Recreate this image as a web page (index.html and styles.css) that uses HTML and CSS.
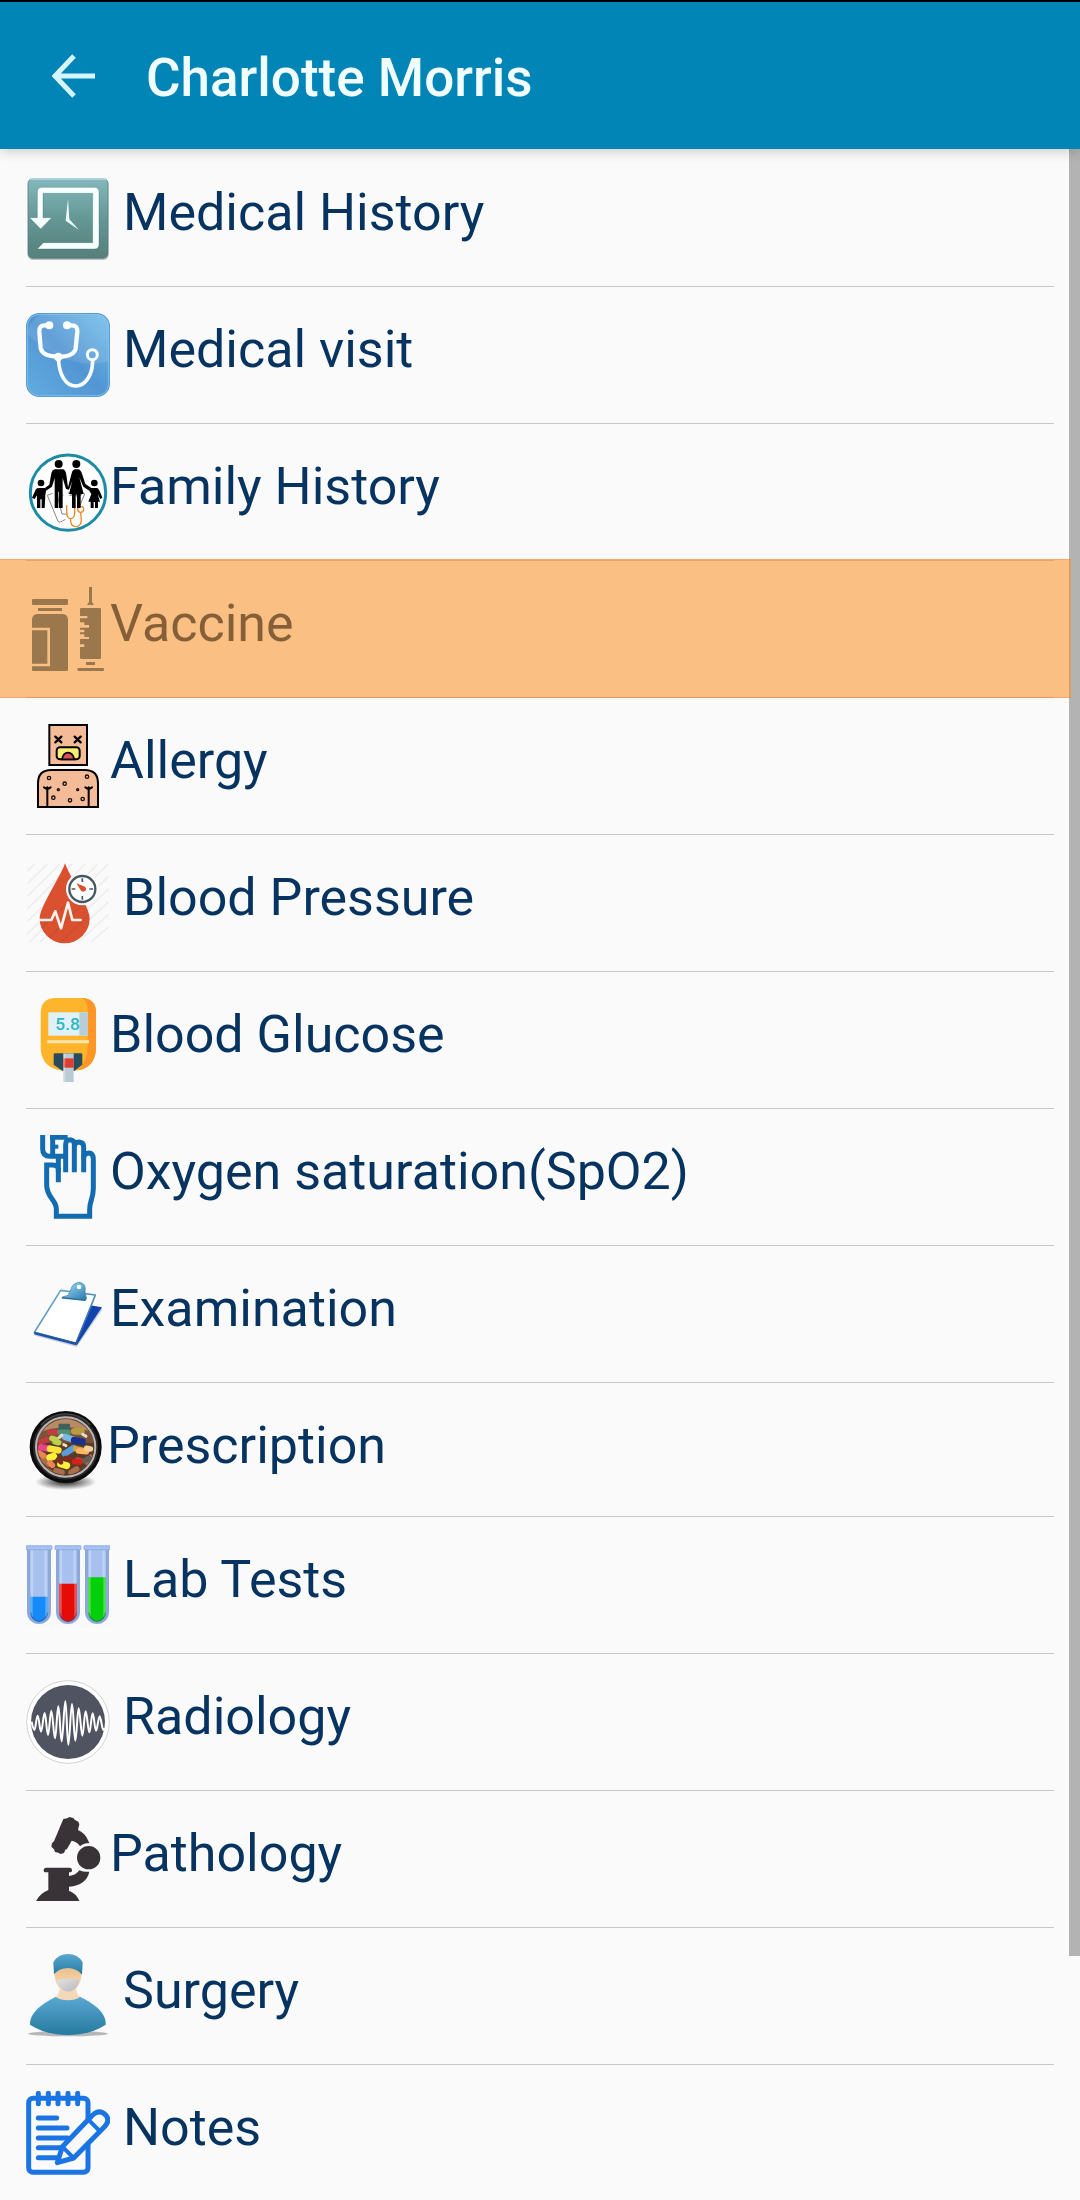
FILE: index.html
```html
<!DOCTYPE html>
<html lang="en">
<head>
    <meta charset="UTF-8">
    <meta name="viewport" content="width=device-width, initial-scale=1.0">
    <title>Charlotte Morris</title>
    <link rel="stylesheet" href="styles.css">
</head>
<body>

    <header class="toolbar">
        <button class="back" aria-label="Back">
            <svg viewBox="0 0 44 44"><path d="M43 22H3M22 2L3 22L22 42" fill="none" stroke="#d5f5ff" stroke-width="5"/></svg>
        </button>
        <h1>Charlotte Morris</h1>
    </header>

    <main class="content">
        <ul class="menu">
            <li><a href="#history">
                <svg class="icon" viewBox="0 0 252 252">
                    <defs><linearGradient id="teal" x2="0" y2="1"><stop offset="0" stop-color="#83b8bd"/><stop offset=".5" stop-color="#659795"/><stop offset="1" stop-color="#557f7b"/></linearGradient></defs>
                    <rect x="5" y="9" width="243" height="243" rx="16" fill="#999" opacity=".6"/>
                    <rect x="6" y="8" width="240" height="239" rx="15" fill="url(#teal)" stroke="#4f7c7c" stroke-width="2"/>
                    <path d="M10 9H242" stroke="#b8dfe5" stroke-width="4"/>
                    <path d="M34 125V48Q34 34 48 34H205Q219 34 219 48V205Q219 219 205 219H34L52 200H200V52H51V125H77L44 159L11 125Z" fill="#f7ffff" stroke="#466f6f" stroke-opacity=".35" stroke-width="3"/>
                    <path d="M126 68L130 130L159 162L119 134Z" fill="#f0ffff"/>
                </svg>
                <span class="label indent">Medical History</span></a></li>
            <li><a href="#visit">
                <svg class="icon" viewBox="0 0 252 252">
                    <defs><linearGradient id="sky" x1="1" x2="0" y2="1"><stop offset="0" stop-color="#75bfe9"/><stop offset=".5" stop-color="#5295d3"/><stop offset="1" stop-color="#62ace0"/></linearGradient></defs>
                    <rect width="252" height="252" rx="40" fill="#4f96d1"/>
                    <rect x="4" y="4" width="244" height="244" rx="36" fill="url(#sky)" stroke="#80c0ec" stroke-width="3"/>
                    <path d="M4 60Q20 4 60 4H210Q248 8 248 45V145Q170 165 90 125Q40 105 4 60Z" fill="#fff" opacity=".1"/>
                    <g fill="none" stroke="#fafeff" stroke-linecap="round">
                        <path d="M70 37H56Q39 37 40 56L44 106Q50 131 97 131Q144 131 149 106L154 56Q155 37 137 37H123" stroke-width="13"/>
                        <path d="M97 135C99 184 118 219 149 219C180 219 199 184 200 145" stroke-width="11"/>
                        <circle cx="199" cy="125" r="15" stroke-width="9"/>
                    </g>
                    <g fill="#fafeff"><circle cx="70" cy="37" r="12"/><circle cx="123" cy="37" r="12"/><circle cx="97" cy="132" r="13"/></g>
                </svg>
                <span class="label indent">Medical visit</span></a></li>
            <li><a href="#family">
                <svg class="icon" viewBox="0 0 252 252">
                    <circle cx="126" cy="128" r="113" fill="#fff" stroke="#1c8ca6" stroke-width="9"/>
                    <path d="M80 130L64 136L96 214Q100 220 118 208M112 135L96 145L108 192H125M125 128L160 142M130 136H165L168 128L176 132L162 166" fill="none" stroke="#888" stroke-width="3"/>
                    <path d="M122 166V186Q122 206 134 206Q146 206 146 186V166M134 206V214Q136 230 150 230Q166 228 166 210L164 188" fill="none" stroke="#e78b2a" stroke-width="4"/>
                    <circle cx="164" cy="178" r="9" fill="none" stroke="#e78b2a" stroke-width="4"/>
                    <circle cx="98" cy="42" r="12"/><circle cx="151" cy="42" r="12"/><circle cx="45" cy="99" r="10"/><circle cx="205" cy="99" r="10"/>
                    <path d="M86 58H111Q119 60 121 75L126 112L137 70Q140 58 148 58H157Q165 60 169 74L178 102L196 114H214Q220 118 229 143L223 147L215 132L222 155H216V174H207V156H203V174H194V155H187L196 132L190 122L172 110L160 82L173 132H164V174H153V134H149V174H138V132H129L139 92L129 119L120 117L110 84V174H99V125H97V174H86V84L78 110L60 122L58 136L56 174H47V148H43V174H33V136L26 147L18 143L30 117Q34 114 39 114H57L70 104L76 70Q78 60 86 58Z"/>
                </svg>
                <span class="label">Family History</span></a></li>
            <li class="pressed"><a href="#vaccine">
                <svg class="icon" viewBox="0 0 252 252">
                    <g fill="#32648d">
                        <rect x="18" y="36" width="108" height="18" rx="3"/><rect x="36" y="63" width="72" height="9"/>
                        <path d="M34 81H110Q126 83 126 98V248Q126 252 122 252H22Q18 252 18 248V98Q18 83 34 81Z"/>
                        <path d="M189 0H198V45L204 54H183L189 45ZM166 63H221Q225 63 225 67V212Q225 216 221 216H166Q162 216 162 212V180H175V172H162V156H189V150H175V142H162V136H175V128H162V122H189V114H175V106H162V94H184V87H162V67Q162 63 166 63Z"/>
                        <rect x="180" y="225" width="27" height="9"/><rect x="154" y="243" width="80" height="9" rx="4"/>
                    </g>
                    <path d="M18 126H68V234H18" fill="none" stroke="#fafafa" stroke-width="8"/>
                </svg>
                <span class="label">Vaccine</span></a></li>
            <li><a href="#allergy">
                <svg class="icon" viewBox="0 0 252 252">
                    <g fill="#f4bb98" stroke="#000" stroke-width="6">
                        <rect x="70" y="3" width="113" height="120"/>
                        <path d="M36 249V178Q36 138 76 138H176Q216 138 216 178V249Z"/>
                        <path d="M64 249V190M54 190L64 196L74 190M188 249V190M178 190L188 196L198 190" fill="none" stroke-linecap="round"/>
                        <path d="M88 38L106 55M106 38L88 55M146 38L164 55M164 38L146 55" stroke-width="7" stroke-linecap="round"/>
                        <rect x="92" y="70" width="69" height="36" rx="10" fill="#f7ee70"/>
                        <path d="M108 106Q112 86 126 86Q140 86 145 106Z" fill="#df5058" stroke-width="5"/>
                    </g>
                    <g fill="none" stroke="#180b08" stroke-width="4"><circle cx="69" cy="162" r="5"/><circle cx="116" cy="179" r="5"/><circle cx="183" cy="158" r="5"/><circle cx="82" cy="221" r="5"/><circle cx="132" cy="229" r="5"/><circle cx="170" cy="225" r="5"/><circle cx="97" cy="197" r="3"/><circle cx="155" cy="197" r="3"/></g>
                </svg>
                <span class="label">Allergy</span></a></li>
            <li><a href="#pressure">
                <svg class="icon" viewBox="0 0 252 252">
                    <path d="M4 30L26 8M4 68L64 8M4 106L102 8M4 144L140 8M4 182L178 8M4 220L216 8M10 244L248 8M42 244L248 46M80 244L248 84M118 244L248 122M156 244L248 160M194 244L248 198" stroke="#ececec" stroke-width="4"/>
                    <path d="M117 7C105 45 41 137 41 173A75 74 0 0 0 191 173C191 137 130 45 117 7Z" fill="#da5130"/>
                    <path d="M48 201L150 99M70 230L185 115M106 243L189 160" stroke="#cb4e31" stroke-width="5"/>
                    <path d="M42 177H76L88 151L105 202L126 125L139 177H164" fill="none" stroke="#fff4ee" stroke-width="8" stroke-linecap="round" stroke-linejoin="round"/>
                    <circle cx="169" cy="84" r="49" fill="#fafafa"/>
                    <circle cx="169" cy="84" r="39" fill="#fff" stroke="#465962" stroke-width="7"/>
                    <path d="M169 52V63M169 105V116M137 84H148M190 84H201" stroke="#465962" stroke-width="5"/>
                    <path d="M151 67L177 77Q184 84 176 91Q166 95 162 84Z" fill="#dc4e2c"/>
                </svg>
                <span class="label indent">Blood Pressure</span></a></li>
            <li><a href="#glucose">
                <svg class="icon" viewBox="0 0 252 252">
                    <path d="M84 0H170Q210 4 210 42V155Q205 214 143 218H112Q50 212 44 155V42Q46 4 84 0Z" fill="#ffb52b"/>
                    <path d="M170 0Q210 4 210 42V155Q205 208 157 217Q184 190 185 150V42Q185 10 170 0Z" fill="#ff9625"/>
                    <rect x="67" y="43" width="119" height="70" fill="#dff2fb"/><rect x="160" y="43" width="26" height="70" fill="#b7cdd7"/>
                    <text class="reading" x="88" y="97">5.8</text>
                    <path d="M64 131H189" stroke="#ffe6ae" stroke-width="9"/>
                    <path d="M87 166H165Q169 166 169 170V200L146 218H109L83 200V170Q83 166 87 166Z" fill="#264d5d"/>
                    <path d="M112 166H143V252H112Z" fill="#b9ccd6"/><path d="M112 181H143V209H112Z" fill="#dc3d30"/><path d="M112 166H118V252H112Z" fill="#fff" opacity=".3"/>
                </svg>
                <span class="label">Blood Glucose</span></a></li>
            <li><a href="#oxygen">
                <svg class="icon" viewBox="0 0 252 252">
                    <g fill="none" stroke="#126caf" stroke-width="15">
                        <path d="M97 142V102Q96 90 80 90H62V152C63 188 91 195 91 222V244H191V222C191 196 202 192 202 160V74Q202 54 188 54Q173 55 173 68"/>
                        <path d="M119 112V28Q119 14 132 14Q145 15 145 28V112M145 36Q145 21 159 21Q173 22 173 36V112"/>
                        <path d="M50 0V42Q50 64 72 64H119M80 0V65M72 7H125M97 65V112"/>
                        <path d="M84 35H97" stroke-width="12"/>
                    </g>
                </svg>
                <span class="label">Oxygen saturation(SpO2)</span></a></li>
            <li><a href="#examination">
                <svg class="icon" viewBox="0 0 252 252">
                    <defs>
                        <linearGradient id="board" x2="1" y2="1"><stop offset="0" stop-color="#6eb7cd"/><stop offset=".6" stop-color="#5085b6"/><stop offset="1" stop-color="#083fa2"/></linearGradient>
                        <linearGradient id="clip" x2="1" y2="1"><stop offset="0" stop-color="#a6e4fc"/><stop offset="1" stop-color="#2575a7"/></linearGradient>
                    </defs>
                    <path d="M26 188L151 222L228 110" fill="none" stroke="#ccd0d8" stroke-width="5"/>
                    <path d="M192 100L228 106L152 220L145 213Z" fill="#0f43ad"/>
                    <path d="M104 55L208 69L150 214L25 181Z" fill="#fff" stroke="url(#board)" stroke-width="5" stroke-linejoin="round"/>
                    <path d="M25 183L150 216" stroke="#1f54a8" stroke-width="7"/>
                    <path d="M108 75L126 70L133 57Q138 32 161 31Q182 34 177 60L182 80L178 85L108 79Z" fill="url(#clip)" stroke="#438ba9" stroke-width="2"/>
                    <circle cx="159" cy="45" r="7" fill="#fafafa"/>
                    <path d="M109 77L179 85" stroke="#2a6d96" stroke-width="4"/>
                </svg>
                <span class="label">Examination</span></a></li>
            <li><a href="#prescription">
                <svg class="icon small" viewBox="0 0 243 243">
                    <defs>
                        <clipPath id="dish"><circle cx="119" cy="114" r="84"/></clipPath>
                        <radialGradient id="shade"><stop offset="0" stop-color="#222"/><stop offset="1" stop-color="#222" stop-opacity="0"/></radialGradient>
                    </defs>
                    <ellipse cx="119" cy="219" rx="92" ry="24" fill="url(#shade)"/>
                    <circle cx="119" cy="114" r="103" fill="#28282a" stroke="#0c0c0d" stroke-width="10"/>
                    <circle cx="119" cy="114" r="89" fill="#5b3a26" stroke="#b9b5b5" stroke-width="6"/>
                    <g clip-path="url(#dish)" stroke-linecap="round" stroke-width="17">
                        <path d="M30 20H210V100H30Z" fill="#b98a66"/>
                        <path d="M30 75Q119 35 210 75V100H30Z" fill="#7a523a"/>
                        <path d="M98 44H132V73H98Z" fill="#3e605c"/>
                        <path d="M50 150L68 165M90 185L108 190M135 190L152 180M185 160L195 145" stroke="#a96c4c"/>
                        <path d="M72 70H90M45 99L62 92M155 153L166 156" stroke="#c53943"/>
                        <path d="M145 67H166" stroke="#b79b40" stroke-width="20"/>
                        <path d="M102 70H126" stroke="#548d72"/>
                        <path d="M78 88L91 92M87 98L98 101" stroke="#b8d24c"/>
                        <path d="M45 115L68 119" stroke="#e9428b" stroke-width="20"/><path d="M72 119L97 124" stroke="#ffe33a" stroke-width="20"/>
                        <path d="M117 84L139 91" stroke="#78b9e5" stroke-width="19"/><path d="M145 94L169 98" stroke="#18318e" stroke-width="21"/>
                        <path d="M116 134L143 117" stroke="#5a9ddb" stroke-width="19"/>
                        <path d="M149 119L167 123M57 182L72 191" stroke="#d2a44a"/>
                        <path d="M158 126L181 128" stroke="#ffb764"/><path d="M182 118L193 120" stroke="#efcf9b"/>
                        <path d="M71 146L83 142M104 165L122 170" stroke="#fff138" stroke-width="21"/>
                        <path d="M39 132L53 140M72 162L79 169" stroke="#ed8454"/>
                        <path d="M119 147L137 152M96 151L105 160" stroke="#842b20" stroke-width="14"/>
                        <path d="M146 158L161 159" stroke="#d4221a"/><path d="M177 155L189 148" stroke="#61605a"/>
                        <path d="M100 85L108 78M113 107L120 110M170 76L180 82" stroke="#e8dccb" stroke-width="9"/>
                    </g>
                    <path d="M45 48A99 99 0 0 1 193 48" fill="none" stroke="#69696b" stroke-width="4" opacity=".6"/>
                </svg>
                <span class="label">Prescription</span></a></li>
            <li><a href="#lab">
                <svg class="icon" viewBox="0 0 252 252">
                    <defs>
                        <pattern id="hatch" width="10" height="10" patternUnits="userSpaceOnUse"><path d="M0 0L10 10" stroke="#e7e8ec"/></pattern>
                        <g id="tube">
                            <path d="M3 20H75V207A36 36 0 0 1 3 207Z" fill="#8da8d8"/><path d="M12 20H66V207A27 30 0 0 1 12 207Z" fill="#a7c0ed"/>
                            <path d="M18 22V210M59 22V210" stroke="#bdd2f5" stroke-width="7"/>
                            <rect y="8" width="78" height="12" rx="2" fill="#a6c2f3" stroke="#7e9fd6" stroke-width="2"/>
                        </g>
                    </defs>
                    <path d="M0 4H252V250H0Z" fill="url(#hatch)"/>
                    <use href="#tube"/><use href="#tube" x="87"/><use href="#tube" x="174"/>
                    <path d="M12 161H66V207A27 30 0 0 1 12 207Z" fill="#148bf6"/><path d="M99 122H153V207A27 30 0 0 1 99 207Z" fill="#e50b07"/><path d="M186 103H240V207A27 30 0 0 1 186 207Z" fill="#05ce0b"/>
                    <path d="M12 161H20V223Q12 216 12 207ZM58 161H66V207Q65 218 58 224ZM99 122H107V223Q99 216 99 207ZM145 122H153V207Q152 218 145 224ZM186 103H194V223Q186 216 186 207ZM232 103H240V207Q239 218 232 224Z" fill="#fff" opacity=".3"/>
                    <path d="M14 209Q19 233 39 235Q60 232 65 209M101 209Q106 233 126 235Q147 232 152 209M188 209Q193 233 213 235Q234 232 239 209" fill="none" stroke="#34518c" stroke-opacity=".5" stroke-width="4"/>
                </svg>
                <span class="label indent">Lab Tests</span></a></li>
            <li><a href="#radiology">
                <svg class="icon" viewBox="0 0 252 252">
                    <circle cx="126" cy="126" r="124" fill="#fff" stroke="#d3d3d3" stroke-width="3"/>
                    <circle cx="126" cy="126" r="111" fill="#505460"/>
                    <path d="M17 125C20 140 22 150 25 150C29 150 31 107 35 107S41 155 45 155S52 99 56 99S62 165 66 165S72 92 76 92S83 175 87 175S93 79 97 79S103 184 107 184S114 64 118 64S123 194 127 194S134 72 138 72S144 182 148 182S154 85 158 85S165 167 169 167S175 94 179 94S186 157 190 157S196 100 200 100S206 152 210 152S217 109 221 109S228 150 232 150L235 145" fill="none" stroke="#fff" stroke-width="6"/>
                </svg>
                <span class="label indent">Radiology</span></a></li>
            <li><a href="#pathology">
                <svg class="icon" viewBox="0 0 252 252">
                    <g fill="#393338">
                        <path d="M112 6L124 4L130 0L142 3L146 8L157 14L160 22L156 39Q179 48 190 78Q174 78 162 88Q154 74 137 71L123 96L118 98L114 108L103 111L97 107L87 105L84 97L76 89L78 79L84 73Z"/>
                        <circle cx="188" cy="122" r="35"/>
                        <path d="M190 164Q181 205 129 209V221Q151 229 160 252H30Q42 229 67 219V166H57Q53 166 53 160Q53 152 61 152H130Q138 152 138 160Q138 166 134 166H129V177Q150 175 160 160Q174 166 190 164Z"/>
                    </g>
                </svg>
                <span class="label">Pathology</span></a></li>
            <li><a href="#surgery">
                <svg class="icon" viewBox="0 0 252 252">
                    <defs>
                        <linearGradient id="scrubs" x2="0" y2="1"><stop offset="0" stop-color="#5ba8d3"/><stop offset="1" stop-color="#257a9f"/></linearGradient>
                        <linearGradient id="skin" x2="0" y2="1"><stop offset="0" stop-color="#e9bd86"/><stop offset="1" stop-color="#f9dfc1"/></linearGradient>
                        <linearGradient id="mask" x2="1" y2="1"><stop offset="0" stop-color="#e2e2e2"/><stop offset="1" stop-color="#b7b8bc"/></linearGradient>
                    </defs>
                    <ellipse cx="126" cy="239" rx="120" ry="8" fill="#b7b7b7"/>
                    <path d="M90 128C58 144 10 172 12 212Q60 243 126 243Q192 243 239 212C242 172 194 144 162 128Z" fill="url(#scrubs)"/>
                    <path d="M102 96Q101 121 89 129Q104 139 126 139Q148 139 162 129Q150 121 150 96Z" fill="#f4d8b8"/>
                    <path d="M84 48Q87 113 126 113Q165 113 168 48Q126 24 84 48Z" fill="url(#skin)"/>
                    <path d="M93 79Q126 70 160 79Q154 111 126 113Q98 111 93 79Z" fill="url(#mask)"/>
                    <path d="M82 25Q96 0 126 0Q156 0 170 25L168 62Q151 42 126 42Q101 42 84 60Z" fill="url(#scrubs)"/>
                </svg>
                <span class="label indent">Surgery</span></a></li>
            <li><a href="#notes">
                <svg class="icon" viewBox="0 0 252 252">
                    <g fill="none" stroke="#1b74e4" stroke-width="15" stroke-linecap="round" stroke-linejoin="round">
                        <rect x="8" y="22" width="178" height="222" rx="13"/>
                        <path d="M37 7V38M67 7V38M96 7V38M126 7V38M155 7V38M37 81H92M37 111H123M37 141H125M37 170H110M37 200H92"/>
                        <path d="M94 215L109 167L200 72Q221 53 239 72Q253 87 237 106L143 201Z" fill="#fafafa"/>
                        <path d="M187 86L221 120M109 167L143 201" stroke-width="12"/>
                    </g>
                </svg>
                <span class="label indent">Notes</span></a></li>
        </ul>
        <div class="scrollbar"></div>
    </main>

</body>
</html>
```

FILE: styles.css
```css
body {
    margin: 0;
    height: 100vh;
    display: flex;
    flex-direction: column;
    overflow: hidden;
    background-color: #fafafa;
    font-family: Roboto, "Liberation Sans", sans-serif;
}
.toolbar {
    display: flex;
    align-items: center;
    flex-shrink: 0;
    height: 147px;
    padding: 0 52px;
    border-top: 2px solid #000;
    background-color: #0085b6;
    box-shadow: 0 2px 12px rgba(0, 0, 0, 0.2);
    z-index: 1;
}
.back {
    padding: 0;
    border: none;
    background: none;
    cursor: pointer;
}
.back svg {
    display: block;
    width: 44px;
    height: 44px;
}
h1 {
    margin: 0 0 0 50px;
    padding-top: 4px;
    color: #f0feff;
    font-size: 53px;
    font-weight: 500;
    line-height: 74px;
}
.content {
    position: relative;
    flex: 1;
    min-height: 0;
}
.menu {
    height: 100%;
    margin: 0;
    padding: 1px 0 0;
    overflow: hidden;
    list-style: none;
    box-sizing: border-box;
}
.menu li {
    position: relative;
}
.menu a {
    display: flex;
    align-items: flex-start;
    margin: 0 26px;
    padding: 26px 0;
    border-bottom: 1px solid #c8c8c8;
    color: #06335f;
    text-decoration: none;
}
.menu li:last-child a {
    padding-bottom: 0;
    border-bottom: none;
}
.icon {
    flex-shrink: 0;
    width: 84px;
    height: 84px;
}
.icon.small {
    width: 81px;
    height: 81px;
}
.label {
    font-size: 52px;
    line-height: 74px;
}
.indent {
    padding-left: 13px;
}
/* touch highlight, drawn over the row and its dividers */
.pressed::after {
    content: "";
    position: absolute;
    inset: -2px 9px 0 0;
    z-index: 2;
    box-sizing: border-box;
    border: solid rgba(255, 110, 60, 0.3);
    border-width: 1px 0;
    background-color: rgba(250, 136, 19, 0.52);
    pointer-events: none;
}
.scrollbar {
    position: absolute;
    top: 0;
    right: 0;
    width: 11px;
    height: 88.1%;
    background-color: #b3b3b3;
}
.reading {
    fill: #2bb8bd;
    font-size: 52px;
    font-weight: 500;
}
```
